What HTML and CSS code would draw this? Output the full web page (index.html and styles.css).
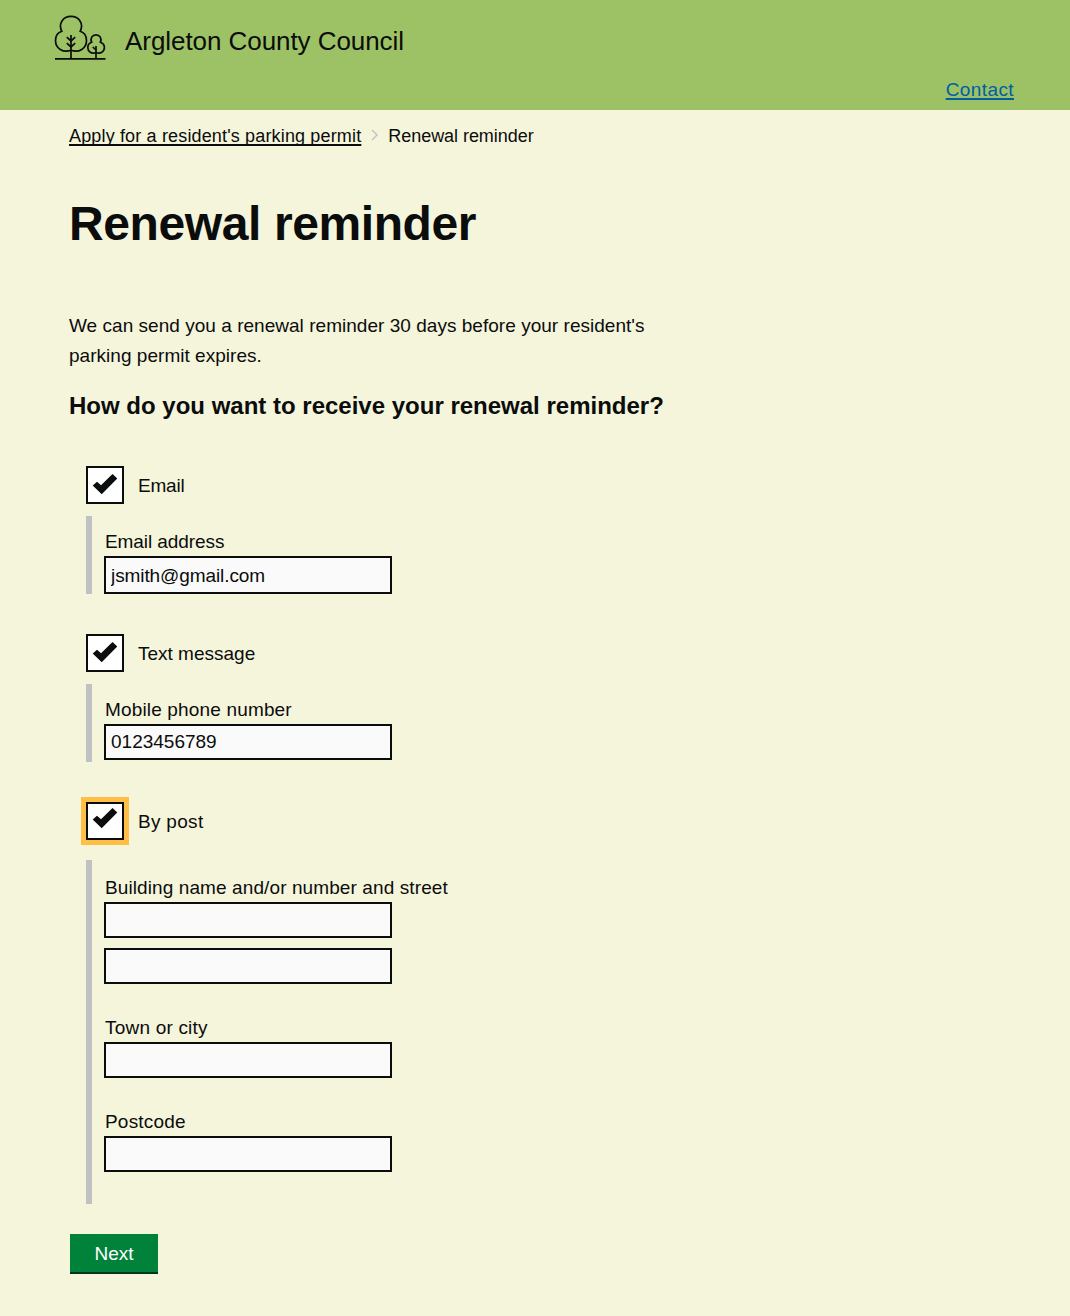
FILE: index.html
```html
<!DOCTYPE html>
<html lang="en">
<head>
<meta charset="utf-8">
<title>Renewal reminder - Argleton County Council</title>
<link rel="stylesheet" href="styles.css">
</head>
<body>
<header class="header">
  <div class="brand">
    <svg class="logo" viewBox="0 0 52 46" fill="none" stroke="currentColor" stroke-width="1.7" aria-hidden="true">
      <path d="M1 43.8H51.5M17 20V43.8M42 31V43.8"/>
      <path d="M17 35.3C9 38 1.5 33.5 1.5 25.5C1.5 21 4 17.5 7.8 16.3C4 8.5 9 1.4 17 1.4S30 8.5 26.2 16.3C30 17.5 32.5 21 32.5 25.5C32.5 33.5 25 38 17 35.3"/>
      <path d="M12.8 22.2L17 26L21.2 22.2M12.8 28.2L17 32L21.2 28.2"/>
      <path d="M42 37.500C37.500 39.300 33.800 36.500 33.800 32.500C33.800 30 35.300 27.900 37.600 27.200C36 23.500 38 19.900 42 19.900S48 23.500 46.400 27.200C48.700 27.900 50.400 30 50.400 32.500C50.400 36.500 46.500 39.300 42 37.500"/>
      <path d="M38.800 32L42 35"/>
    </svg>
    <span class="brand-name">Argleton County Council</span>
  </div>
  <a class="contact" href="#">Contact</a>
</header>
<main class="main">
  <nav class="crumbs">
    <a href="#" class="crumb-link">Apply for a resident's parking permit</a>
    <svg class="chevron" viewBox="0 0 8 12" fill="none" stroke="currentColor" stroke-width="1.400"><path d="M1 1L6 6L1 11"/></svg>
    <span class="crumb-here">Renewal reminder</span>
  </nav>
  <h1 class="title">Renewal reminder</h1>
  <p class="intro">We can send you a renewal reminder 30 days before your resident's parking permit expires.</p>
  <form class="form">
    <h2 class="question">How do you want to receive your renewal reminder?</h2>

    <div class="option">
      <span class="box" role="checkbox" aria-checked="true"><svg class="tick" viewBox="0 0 34 34"><path d="M4.700 17.500L9 13.700L13 17.200L24.500 6L29.300 10.500L13.700 26.200Z"/></svg></span>
      <span class="option-label option-label-email">Email</span>
    </div>
    <div class="conditional">
      <label class="label label-email" for="email">Email address</label>
      <input class="input input-email" id="email" type="text" value="jsmith@gmail.com">
    </div>

    <div class="option">
      <span class="box" role="checkbox" aria-checked="true"><svg class="tick" viewBox="0 0 34 34"><path d="M4.700 17.500L9 13.700L13 17.200L24.500 6L29.300 10.500L13.700 26.200Z"/></svg></span>
      <span class="option-label">Text message</span>
    </div>
    <div class="conditional">
      <label class="label label-phone" for="phone">Mobile phone number</label>
      <input class="input" id="phone" type="text" value="0123456789">
    </div>

    <div class="option option-post">
      <span class="box box-focus" role="checkbox" aria-checked="true"><svg class="tick" viewBox="0 2 34 34"><path d="M4.700 17.500L9 13.700L13 17.200L24.500 6L29.300 10.500L13.700 26.200Z"/></svg></span>
      <span class="option-label option-label-post">By post</span>
    </div>
    <div class="conditional conditional-post">
      <div class="field">
        <label class="label" for="street">Building name and/or number and street</label>
        <input class="input" id="street" type="text">
        <input class="input input-second" type="text" aria-label="Street line 2">
      </div>
      <div class="field">
        <label class="label label-short" for="town">Town or city</label>
        <input class="input" id="town" type="text">
      </div>
      <div class="field">
        <label class="label label-short" for="postcode">Postcode</label>
        <input class="input" id="postcode" type="text">
      </div>
    </div>

    <button class="button" type="button">Next</button>
  </form>
</main>
</body>
</html>
```
FILE: styles.css
```css
* { box-sizing: border-box; }

body {
  margin: 0;
  min-height: 1316px;
  background: #f5f5dc;
  color: #0b0c0c;
  font: 19px/30px "Liberation Sans", Arial, sans-serif;
}

.header {
  height: 110px;
  padding: 15px 56px 0 54px;
  background: #9dc265;
  display: flex;
  flex-direction: column;
}

.brand { display: flex; height: 46px; }
.logo { width: 52px; height: 46px; }
.brand-name {
  margin: 11px 0 0 19px;
  font-size: 26px;
  letter-spacing: -0.06px;
}
.contact {
  align-self: flex-end;
  margin-top: 14px;
  color: #005ea5;
  letter-spacing: 0.4px;
  text-decoration-thickness: 2px;
  text-underline-offset: 2px;
  text-decoration-skip-ink: none;
}

.main { padding-left: 69px; }

.crumbs {
  display: flex;
  align-items: center;
  height: 30px;
  margin-top: 11px;
  font-size: 18px;
}
.crumb-link {
  color: inherit;
  letter-spacing: 0.155px;
  text-decoration-thickness: 2px;
  text-underline-offset: 2px;
  text-decoration-skip-ink: none;
}
.crumb-here { letter-spacing: -0.05px; }
.chevron { width: 8px; height: 12px; margin: -2px 9px 0 10px; color: #bfc1c3; }

.title {
  margin: 48px 0 0;
  font-size: 48px;
  line-height: 50px;
  letter-spacing: -0.4px;
}

.intro { width: 600px; margin: 62px 0 0; letter-spacing: 0.03px; }

.question {
  margin: 20px 0 45px;
  font-size: 24px;
  line-height: 30px;
}

.option {
  display: flex;
  align-items: center;
  height: 38px;
  margin-left: 17px;
}
.conditional + .option { margin-top: 40px; }
.box {
  width: 38px;
  height: 38px;
  border: 2px solid #0b0c0c;
  background: #fff;
}
.box-focus { box-shadow: 0 0 0 5px #ffbf47; }
.tick { display: block; width: 34px; height: 34px; fill: #0b0c0c; }
.option-label { padding-top: 2px; margin-left: 14px; }
.option-label-email { letter-spacing: -0.2px; }
.option-label-post { letter-spacing: 0.3px; }

.conditional {
  height: 78px;
  margin: 12px 0 0 17px;
  padding: 10px 0 0 12px;
  border-left: 6px solid #bfc1c3;
}
.conditional-post {
  height: 344px;
  margin-top: 20px;
  padding-top: 12px;
}
.field + .field { margin-top: 28px; }

.label {
  display: block;
  height: 30px;
  padding-left: 1px;
  line-height: 32px;
  letter-spacing: 0.1px;
}
.label-email { letter-spacing: -0.07px; }
.label-phone { letter-spacing: 0.16px; }
.label-short { letter-spacing: 0.2px; }

.input {
  display: block;
  width: 288px;
  height: 36px;
  padding: 0 5px;
  border: 2px solid #0b0c0c;
  border-radius: 0;
  background: #fafafa;
  color: inherit;
  font: inherit;
}
.input-email { padding-top: 2px; height: 38px; letter-spacing: -0.09px; }
.input-second { margin-top: 10px; }

.button {
  display: block;
  width: 88px;
  height: 40px;
  margin: 30px 0 0 1px;
  padding: 2px 0 0;
  border: 0;
  border-bottom: 2px solid #003618;
  background: #00823b;
  color: #fff;
  font: inherit;
}
```
